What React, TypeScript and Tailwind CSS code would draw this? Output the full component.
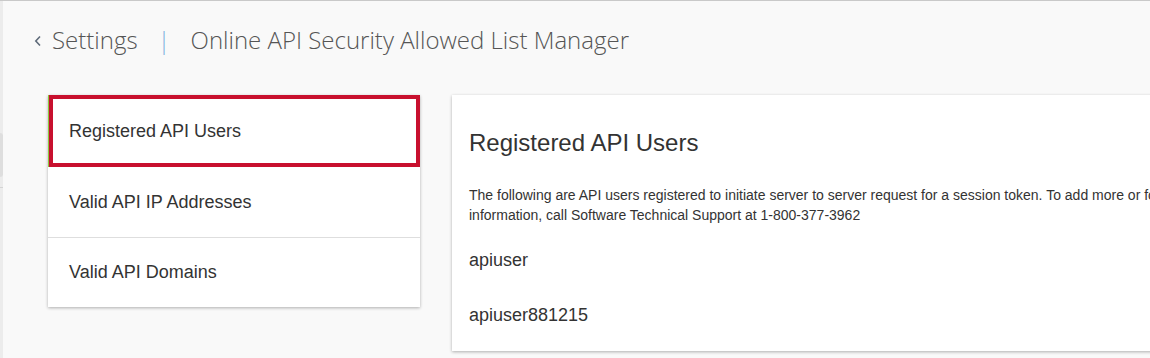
import React from "react";

export default function App() {
  return (
    <div className="w-[1150px] h-[358px] overflow-hidden bg-[#f9f9f9] border-t border-[#c9c9c9] flex">
      <div className="w-[3px] shrink-0 bg-[#ececec] flex flex-col">
        <div className="h-[132px]" />
        <div className="h-[44px] bg-[#dedede] rounded-r-sm" />
        <div className="mt-[10px] h-px bg-[#d4d4d4]" />
      </div>
      <div className="flex-1 min-w-0 flex flex-col">
        <div className="h-[78px] pl-[30px] flex items-center text-[#555] font-['Open_Sans',sans-serif] font-light text-[24px] whitespace-nowrap">
          <svg width="10" height="14" viewBox="0 0 10 14" className="mr-[9px] mt-[1px]">
            <path d="M7 2.5 L2.8 7 L7 11.5" fill="none" stroke="#5f6b7a" strokeWidth="1.6" />
          </svg>
          <span>Settings</span>
          <span className="mx-[20px] text-[#7fb2e0]">|</span>
          <span>Online API Security Allowed List Manager</span>
        </div>
        <div className="flex items-start pl-[45px] pt-[16px] gap-[32px] font-['Liberation_Sans',Arial,sans-serif] text-[#333]">
          <div className="w-[372px] shrink-0 bg-white shadow-[0_1px_3px_rgba(0,0,0,0.3)]">
            <div className="border-l border-[#8cc63f]">
              <div className="h-[72px] border-4 border-[#c8102e] flex items-center pl-[16px] text-[18px]">
                Registered API Users
              </div>
            </div>
            <div className="h-[70px] flex items-center pl-[21px] text-[18px]">
              Valid API IP Addresses
            </div>
            <div className="h-[70px] flex items-center pl-[21px] text-[18px] border-t border-[#dedede]">
              Valid API Domains
            </div>
          </div>
          <div className="w-[760px] shrink-0 h-[256px] bg-white shadow-[0_1px_3px_rgba(0,0,0,0.3)] pl-[17px] pt-[34px]">
            <h2 className="text-[24px] leading-[28px]">Registered API Users</h2>
            <p className="mt-[28px] text-[14px] leading-[20px] whitespace-nowrap">
              The following are API users registered to initiate server to server request for a session token. To add more or for more
              <br />
              information, call Software Technical Support at 1-800-377-3962
            </p>
            <div className="mt-[24px] text-[18px] leading-[22px]">apiuser</div>
            <div className="mt-[33px] text-[18px] leading-[22px]">apiuser881215</div>
          </div>
        </div>
      </div>
    </div>
  );
}
